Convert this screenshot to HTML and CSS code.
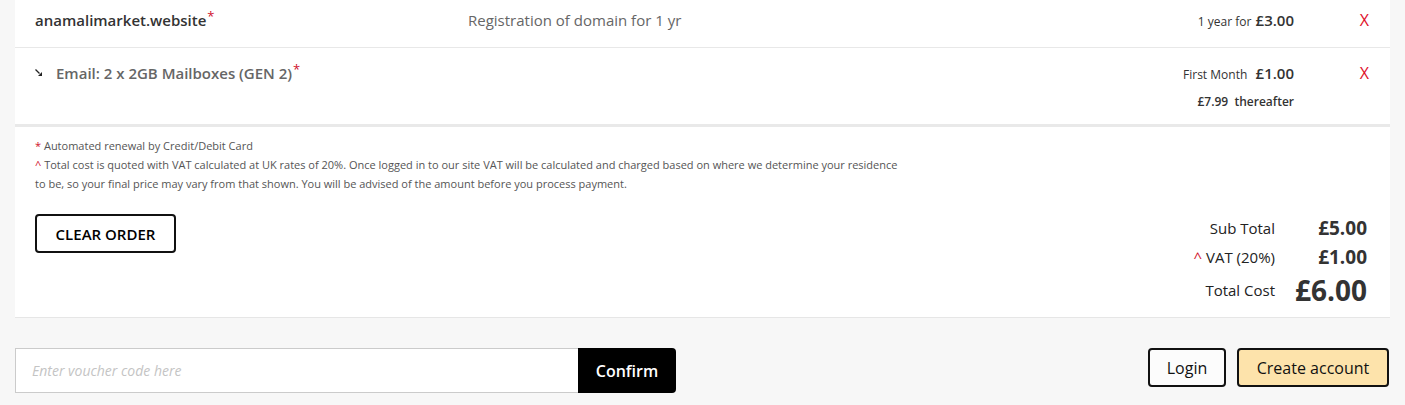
FILE: index.html
```html
<!DOCTYPE html>
<html lang="en">
  <head>
    <meta charset="UTF-8" />
    <meta name="viewport" content="width=device-width, initial-scale=1.0" />
    <title>Basket</title>
    <link rel="stylesheet" href="styles.css">
  </head>
  <body>
    <div class="basket">
      <div class="item item-first">
        <div class="item-name">anamalimarket.website<sup class="star">*</sup></div>
        <div class="item-desc">Registration of domain for 1 yr</div>
        <div class="item-price">
          <div><span class="small">1 year for</span> <span class="amount">£3.00</span></div>
        </div>
        <a href="#" class="remove">X</a>
      </div>
      <div class="item item-last">
        <div class="item-name item-sub">
          <svg class="arrow" width="7" height="7" viewBox="0 0 7 7">
            <path d="M0.5 0.5 L4.5 4.5" stroke="#222" stroke-width="1.2" />
            <path d="M7 3 L7 7 L3 7 Z" fill="#222" />
          </svg>
          <span>Email: 2 x 2GB Mailboxes (GEN 2)<sup class="star">*</sup></span>
        </div>
        <div class="item-desc"></div>
        <div class="item-price">
          <div><span class="small">First Month</span>&nbsp; <span class="amount">£1.00</span></div>
          <div class="after">£7.99&nbsp; thereafter</div>
        </div>
        <a href="#" class="remove">X</a>
      </div>

      <div class="notes">
        <p><span class="caret">*</span> Automated renewal by Credit/Debit Card</p>
        <p><span class="caret">^</span> Total cost is quoted with VAT calculated at UK rates of 20%. Once logged in to our site VAT will be calculated and charged based on where we determine your residence to be, so your final price may vary from that shown. You will be advised of the amount before you process payment.</p>
      </div>

      <div class="summary">
        <button class="clear-btn">CLEAR ORDER</button>
        <div class="totals">
          <div class="total-label">Sub Total</div>
          <div class="total-value">£5.00</div>
          <div class="total-label"><span class="caret">^</span> VAT (20%)</div>
          <div class="total-value">£1.00</div>
          <div class="total-label grand">Total Cost</div>
          <div class="total-value grand-value">£6.00</div>
        </div>
      </div>
    </div>

    <div class="actions">
      <div class="voucher">
        <input type="text" placeholder="Enter voucher code here" />
        <button class="confirm-btn">Confirm</button>
      </div>
      <div class="account">
        <button class="login-btn">Login</button>
        <button class="create-btn">Create account</button>
      </div>
    </div>
  </body>
</html>
```

FILE: styles.css
```css
body {
  font-family: "Open Sans", Arial, sans-serif;
  margin: 0;
  padding: 0;
  background-color: #f7f7f7;
  color: #333;
}
.basket {
  margin: 0 15px;
  background-color: #fff;
  border-bottom: 1px solid #e6e6e6;
}
.item {
  display: grid;
  grid-template-columns: 433px 1fr auto 75px;
  padding: 0 21px 0 20px;
}
.item-first {
  height: 48px;
  box-sizing: border-box;
  padding-top: 9px;
  border-bottom: 1px solid #e8e8e8;
  line-height: 23px;
}
.item-last {
  height: 79px;
  box-sizing: border-box;
  padding-top: 14px;
  border-bottom: 3px solid #e9e9e9;
  line-height: 22px;
}
.item-name {
  font-size: 15px;
  font-weight: 600;
  color: #333;
}
.item-sub {
  display: flex;
  align-items: flex-start;
  color: #666;
  white-space: nowrap;
}
.arrow {
  margin: 7px 14px 0 0;
}
.star {
  color: #d0112b;
  font-weight: 400;
  font-size: 13px;
  line-height: 0;
  vertical-align: 5px;
  margin-left: 1px;
}
.item-desc {
  font-size: 15px;
  color: #666;
}
.item-price {
  text-align: right;
}
.small {
  font-size: 12px;
}
.amount {
  font-size: 15px;
  font-weight: 600;
}
.after {
  font-size: 12px;
  font-weight: 600;
  margin-top: 5px;
}
.remove {
  font-size: 16px;
  color: #e0102a;
  text-decoration: none;
  text-align: right;
}
.notes {
  padding: 9px 20px 0 20px;
  max-width: 870px;
  font-size: 11px;
  line-height: 19px;
  color: #555;
}
.notes p {
  margin: 0;
}
.caret {
  color: #d0112b;
}
.summary {
  display: flex;
  justify-content: space-between;
  align-items: flex-start;
  padding: 21px 23px 9px 20px;
}
.clear-btn {
  font-family: "Open Sans", Arial, sans-serif;
  font-size: 15px;
  font-weight: 600;
  color: #000;
  background-color: #fff;
  border: 2px solid #111;
  border-radius: 4px;
  width: 141px;
  height: 39px;
  padding: 0;
  cursor: pointer;
}
.totals {
  display: grid;
  grid-template-columns: auto 92px;
  grid-template-rows: 28px 30px 36px;
  align-items: center;
}
.total-label {
  text-align: right;
  font-size: 15px;
  color: #222;
}
.total-value {
  text-align: right;
  font-size: 19px;
  font-weight: 700;
  color: #333;
}
.grand-value {
  font-size: 28px;
}
.actions {
  display: flex;
  justify-content: space-between;
  align-items: flex-start;
  margin: 30px 16px 0 15px;
}
.voucher {
  display: flex;
}
.voucher input {
  width: 563px;
  height: 45px;
  box-sizing: border-box;
  border: 1px solid #cbcbcb;
  border-right: none;
  padding: 0 16px;
  font-family: "Open Sans", Arial, sans-serif;
  font-size: 14px;
  outline: none;
}
.voucher input::placeholder {
  color: #c4c4c4;
  font-style: italic;
}
.confirm-btn {
  width: 98px;
  height: 45px;
  background-color: #000;
  color: #fff;
  border: none;
  border-radius: 0 4px 4px 0;
  font-family: "Open Sans", Arial, sans-serif;
  font-size: 16px;
  font-weight: 600;
  cursor: pointer;
}
.account {
  display: flex;
  gap: 11px;
}
.login-btn,
.create-btn {
  height: 39px;
  border: 2px solid #111;
  border-radius: 4px;
  font-family: "Open Sans", Arial, sans-serif;
  font-size: 16px;
  color: #111;
  cursor: pointer;
  padding: 0;
}
.login-btn {
  width: 78px;
  background-color: #fcfcfc;
}
.create-btn {
  width: 152px;
  background-color: #fde3ab;
}
```
